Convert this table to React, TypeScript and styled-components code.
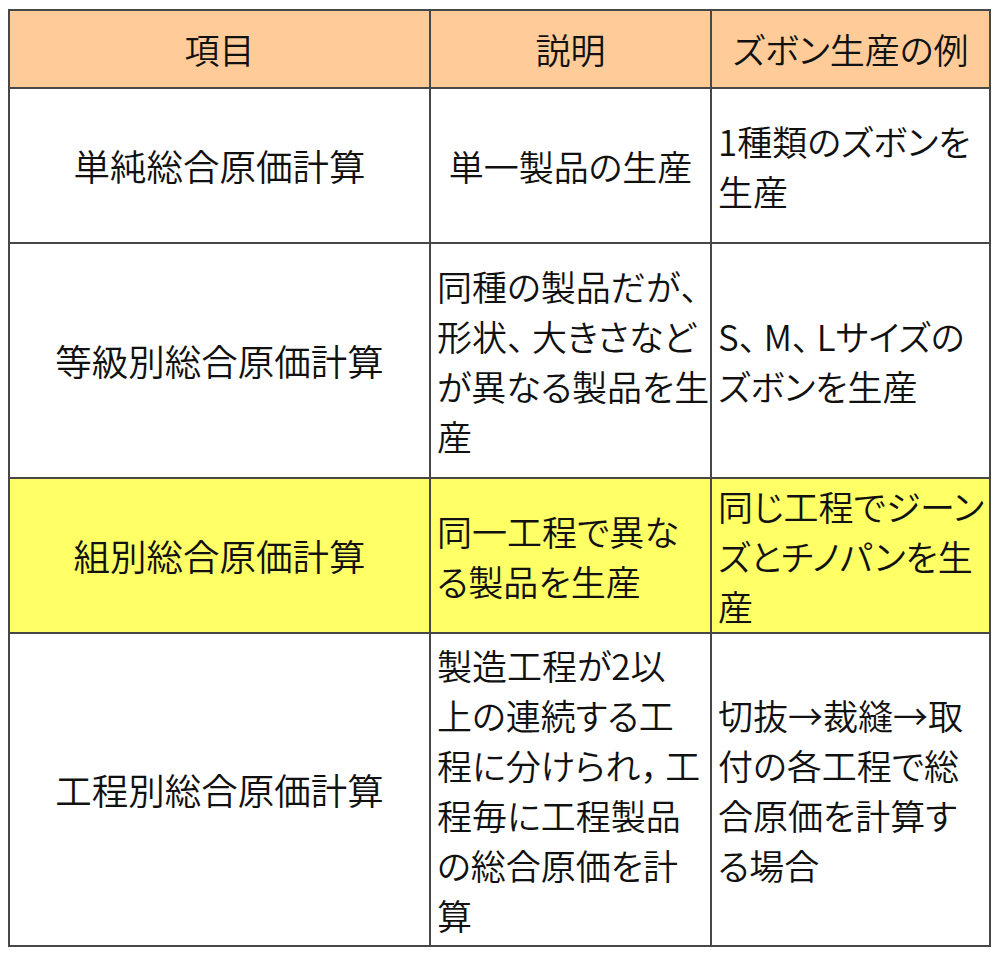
import React from "react";
import styled, { createGlobalStyle } from "styled-components";

const GlobalStyle = createGlobalStyle`
  html, body {
    margin: 0;
    padding: 0;
    background: #ffffff;
  }
  body {
    font-family: "Noto Sans CJK JP", "Noto Sans", sans-serif;
    color: #111;
  }
`;

const Page = styled.div`
  padding: 9px 0 0 8px;
  width: 1000px;
  height: 954px;
  box-sizing: border-box;
`;

const Table = styled.div`
  display: grid;
  grid-template-columns: 419px 279px 277px;
  grid-template-rows: 76px 153px 233px 153px 311px;
  gap: 2px;
  padding: 2px;
  background: #474747;
  width: max-content;
`;

type Tone = "header" | "plain" | "highlight";

const bg: Record<Tone, string> = {
  header: "#ffcc99",
  plain: "#ffffff",
  highlight: "#ffff66",
};

const Cell = styled.div<{ $tone: Tone; $align: "center" | "left"; $size: number }>`
  background: ${(p) => bg[p.$tone]};
  display: flex;
  flex-direction: column;
  justify-content: center;
  align-items: ${(p) => (p.$align === "center" ? "center" : "flex-start")};
  padding: 0 ${(p) => (p.$align === "center" ? "0" : "4px")} 0
    ${(p) => (p.$align === "center" ? "0" : "6px")};
  font-size: ${(p) => p.$size}px;
  font-weight: 350;
  line-height: 50px;
  font-feature-settings: "palt";
  color: #111;
  overflow: visible;
`;

const Line = styled.span`
  display: block;
  white-space: nowrap;
`;

const Wide = styled.span`
  font-feature-settings: normal;
  letter-spacing: -10px;
`;

function renderLine(text: string) {
  const parts = text.split(/([、，])/);
  return parts.map((p, i) =>
    p === "、" || p === "，" ? <Wide key={i}>{p}</Wide> : <React.Fragment key={i}>{p}</React.Fragment>
  );
}

type Row = {
  tone: Tone;
  cells: { lines: string[]; align: "center" | "left" }[];
};

const rows: Row[] = [
  {
    tone: "header",
    cells: [
      { lines: ["項目"], align: "center" },
      { lines: ["説明"], align: "center" },
      { lines: ["ズボン生産の例"], align: "center" },
    ],
  },
  {
    tone: "plain",
    cells: [
      { lines: ["単純総合原価計算"], align: "center" },
      { lines: ["単一製品の生産"], align: "center" },
      { lines: ["1種類のズボンを", "生産"], align: "left" },
    ],
  },
  {
    tone: "plain",
    cells: [
      { lines: ["等級別総合原価計算"], align: "center" },
      {
        lines: ["同種の製品だが、", "形状、大きさなど", "が異なる製品を生", "産"],
        align: "left",
      },
      { lines: ["S、M、Lサイズの", "ズボンを生産"], align: "left" },
    ],
  },
  {
    tone: "highlight",
    cells: [
      { lines: ["組別総合原価計算"], align: "center" },
      { lines: ["同一工程で異な", "る製品を生産"], align: "left" },
      { lines: ["同じ工程でジーン", "ズとチノパンを生", "産"], align: "left" },
    ],
  },
  {
    tone: "plain",
    cells: [
      { lines: ["工程別総合原価計算"], align: "center" },
      {
        lines: [
          "製造工程が2以",
          "上の連続する工",
          "程に分けられ，工",
          "程毎に工程製品",
          "の総合原価を計",
          "算",
        ],
        align: "left",
      },
      {
        lines: ["切抜→裁縫→取", "付の各工程で総", "合原価を計算す", "る場合"],
        align: "left",
      },
    ],
  },
];

export default function App() {
  return (
    <>
      <GlobalStyle />
      <Page>
        <Table>
          {rows.map((row, ri) =>
            row.cells.map((c, ci) => (
              <Cell
                key={`${ri}-${ci}`}
                $tone={row.tone}
                $align={c.align}
                $size={ci === 0 && ri > 0 ? 36.5 : 35}
              >
                {c.lines.map((l, li) => (
                  <Line key={li}>{renderLine(l)}</Line>
                ))}
              </Cell>
            ))
          )}
        </Table>
      </Page>
    </>
  );
}
